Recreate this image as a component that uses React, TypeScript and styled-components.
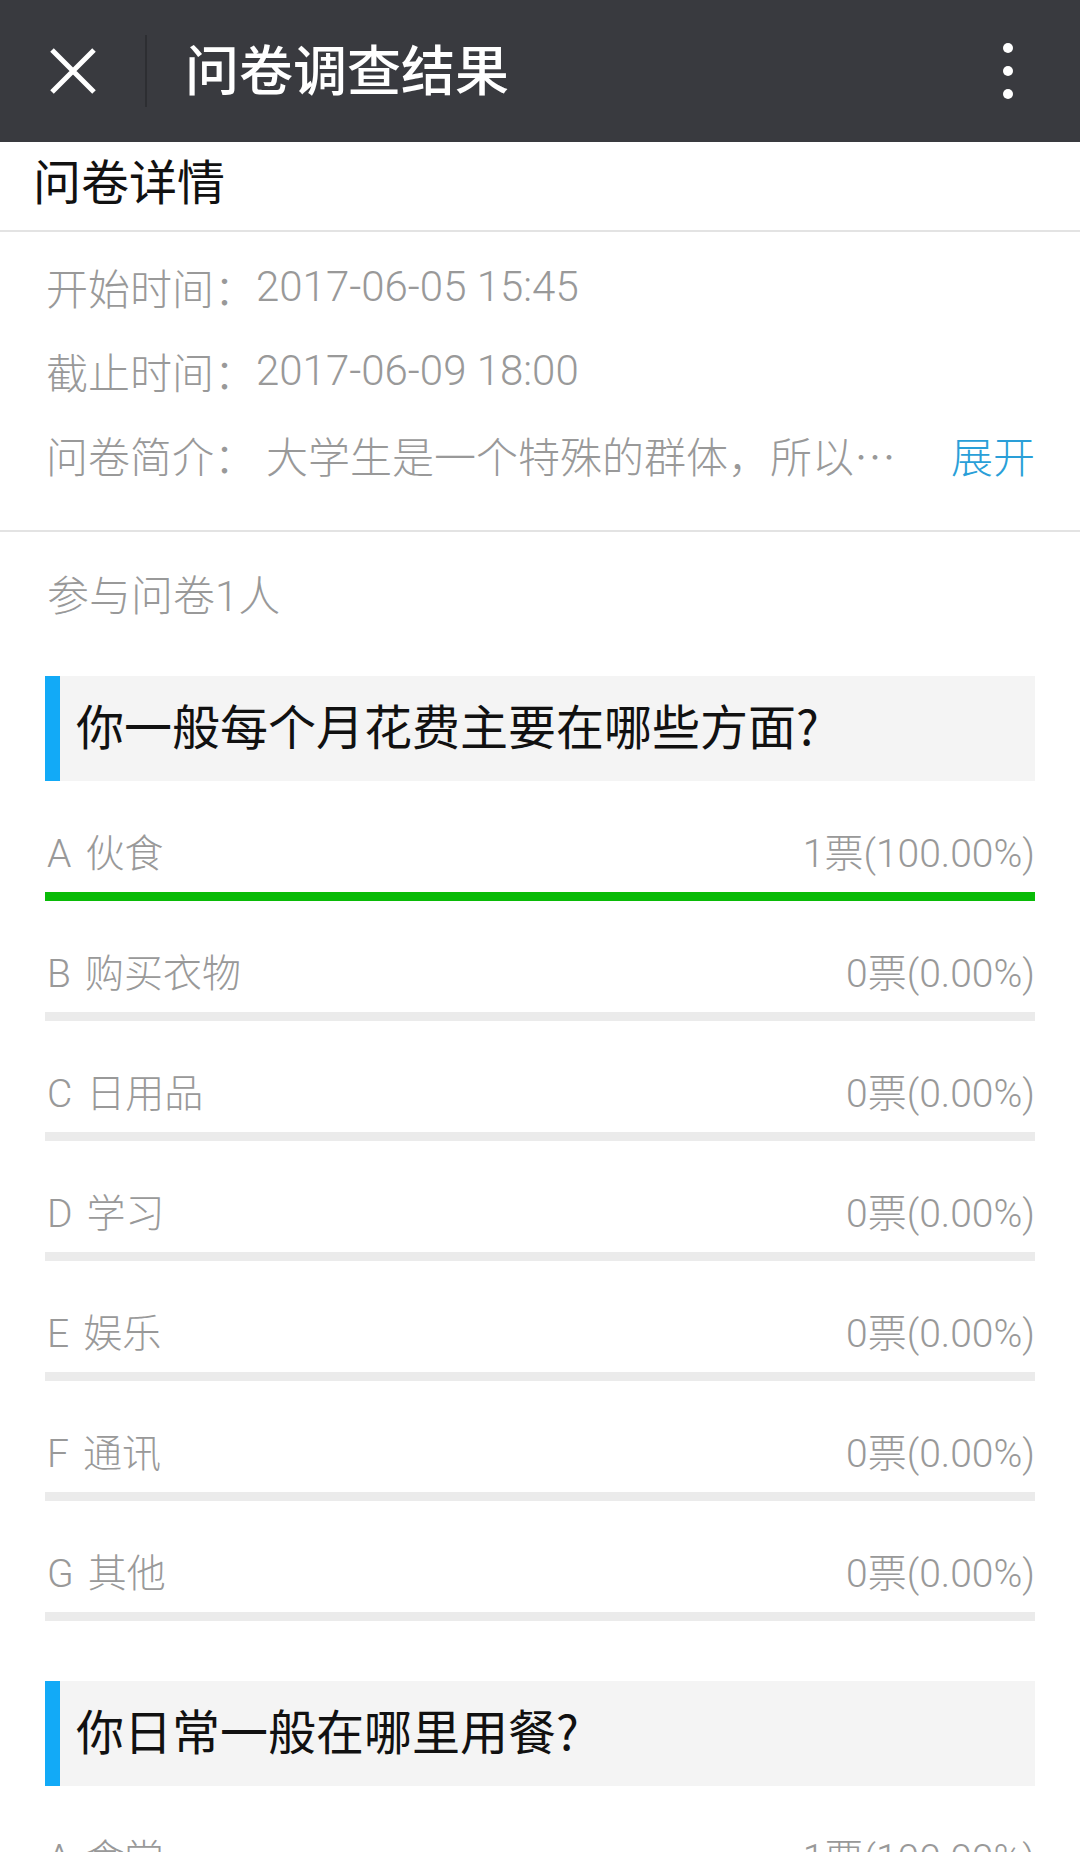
import React from 'react';
import styled, { createGlobalStyle } from 'styled-components';

const GlobalStyle = createGlobalStyle`
  html, body {
    margin: 0;
    padding: 0;
    background: #ffffff;
    font-family: Roboto, "Noto Sans CJK SC", sans-serif;
  }
  ::-webkit-scrollbar {
    display: none;
  }
`;

interface OptionData {
  key: string;
  label: string;
  votes: number;
}

interface QuestionData {
  title: string;
  options: OptionData[];
}

const questions: QuestionData[] = [
  {
    title: '你一般每个月花费主要在哪些方面?',
    options: [
      { key: 'A', label: '伙食', votes: 1 },
      { key: 'B', label: '购买衣物', votes: 0 },
      { key: 'C', label: '日用品', votes: 0 },
      { key: 'D', label: '学习', votes: 0 },
      { key: 'E', label: '娱乐', votes: 0 },
      { key: 'F', label: '通讯', votes: 0 },
      { key: 'G', label: '其他', votes: 0 },
    ],
  },
  {
    title: '你日常一般在哪里用餐?',
    options: [
      { key: 'A', label: '食堂', votes: 1 },
      { key: 'B', label: '外卖', votes: 0 },
      { key: 'C', label: '餐馆', votes: 0 },
    ],
  },
];

const TOTAL = 1;

const Page = styled.div`
  width: 1080px;
  background: #ffffff;
`;

const Header = styled.header`
  height: 142px;
  background: #393a3f;
  display: flex;
  align-items: center;
`;

const CloseButton = styled.div`
  width: 145px;
  height: 142px;
  display: flex;
  align-items: center;
  justify-content: center;
`;

const HeaderDivider = styled.div`
  width: 2px;
  height: 72px;
  background: #2d2e32;
`;

const HeaderTitle = styled.h1`
  margin: 0 0 0 38px;
  padding-bottom: 7px;
  flex: 1;
  color: #ffffff;
  font-size: 54px;
  font-weight: 500;
  font-family: "Noto Sans CJK SC", sans-serif;
`;

const MoreButton = styled.div`
  width: 72px;
  height: 142px;
  margin-right: 36px;
  display: flex;
  flex-direction: column;
  align-items: center;
  justify-content: center;
  gap: 13px;
`;

const Dot = styled.span`
  width: 10px;
  height: 10px;
  border-radius: 50%;
  background: #ffffff;
`;

const SectionTitle = styled.div`
  height: 90px;
  padding: 0 0 14px 33px;
  box-sizing: border-box;
  display: flex;
  align-items: center;
  font-size: 48px;
  color: #111111;
  font-family: "Noto Sans CJK SC", sans-serif;
  border-bottom: 2px solid #e3e3e3;
`;

const InfoBlock = styled.div`
  padding: 12px 45px 34px 46px;
  border-bottom: 2px solid #e3e3e3;
`;

const InfoRow = styled.div`
  height: 84px;
  display: flex;
  align-items: center;
  font-size: 42px;
  font-weight: 300;
  color: #999999;
  white-space: nowrap;
`;

const InfoLabel = styled.span`
  font-family: "Noto Sans CJK SC", sans-serif;
`;

const Description = styled.span`
  width: 642px;
  margin-left: 10px;
  overflow: hidden;
  text-overflow: ellipsis;
  font-family: "Noto Sans CJK SC", sans-serif;
`;

const ExpandLink = styled.span`
  margin-left: auto;
  color: #2a9fd8;
  font-family: "Noto Sans CJK SC", sans-serif;
`;

const Body = styled.div`
  padding: 0 45px;
`;

const Participants = styled.div`
  height: 144px;
  padding: 40px 0 0 2px;
  box-sizing: border-box;
  font-size: 42px;
  font-weight: 300;
  line-height: 50px;
  color: #999999;
`;

const QuestionTitle = styled.div<{ $first?: boolean }>`
  height: 105px;
  margin-top: ${(props) => (props.$first ? '0' : '60px')};
  padding: 0 0 9px 16px;
  box-sizing: border-box;
  display: flex;
  align-items: center;
  background: #f4f4f4;
  border-left: 15px solid #12aaf7;
  font-size: 48px;
  color: #111111;
  font-family: "Noto Sans CJK SC", sans-serif;
`;

const OptionRow = styled.div`
  padding-top: 44px;
`;

const OptionLine = styled.div`
  height: 50px;
  margin-bottom: 17px;
  display: flex;
  align-items: center;
  justify-content: space-between;
  font-size: 39px;
  font-weight: 300;
  color: #999999;
`;

const OptionKey = styled.span`
  margin: 0 14px 0 2px;
`;

const Bar = styled.div`
  height: 9px;
  background: #ebebeb;
`;

const BarFill = styled.div`
  height: 100%;
  background: #09bb07;
`;

const CloseIcon = () => (
  <svg width="48" height="48" viewBox="0 0 48 48">
    <path d="M3 3 L45 45 M45 3 L3 45" stroke="#ffffff" strokeWidth="5" />
  </svg>
);

const Option = ({ option }: { option: OptionData }) => {
  const percent = (option.votes / TOTAL) * 100;
  return (
    <OptionRow>
      <OptionLine>
        <span>
          <OptionKey>{option.key}</OptionKey>
          {option.label}
        </span>
        <span>
          {option.votes}票({percent.toFixed(2)}%)
        </span>
      </OptionLine>
      <Bar>
        <BarFill style={{ width: `${percent}%` }} />
      </Bar>
    </OptionRow>
  );
};

export default function App() {
  return (
    <Page>
      <GlobalStyle />
      <Header>
        <CloseButton>
          <CloseIcon />
        </CloseButton>
        <HeaderDivider />
        <HeaderTitle>问卷调查结果</HeaderTitle>
        <MoreButton>
          <Dot />
          <Dot />
          <Dot />
        </MoreButton>
      </Header>

      <SectionTitle>问卷详情</SectionTitle>

      <InfoBlock>
        <InfoRow>
          <InfoLabel>开始时间：</InfoLabel>2017-06-05 15:45
        </InfoRow>
        <InfoRow>
          <InfoLabel>截止时间：</InfoLabel>2017-06-09 18:00
        </InfoRow>
        <InfoRow>
          <InfoLabel>问卷简介：</InfoLabel>
          <Description>大学生是一个特殊的群体，所以他们的消费观念和消费方式也与众不同。</Description>
          <ExpandLink>展开</ExpandLink>
        </InfoRow>
      </InfoBlock>

      <Body>
        <Participants>参与问卷1人</Participants>
        {questions.map((q, i) => (
          <div key={q.title}>
            <QuestionTitle $first={i === 0}>{q.title}</QuestionTitle>
            {q.options.map((o) => (
              <Option key={o.key} option={o} />
            ))}
          </div>
        ))}
      </Body>
    </Page>
  );
}
